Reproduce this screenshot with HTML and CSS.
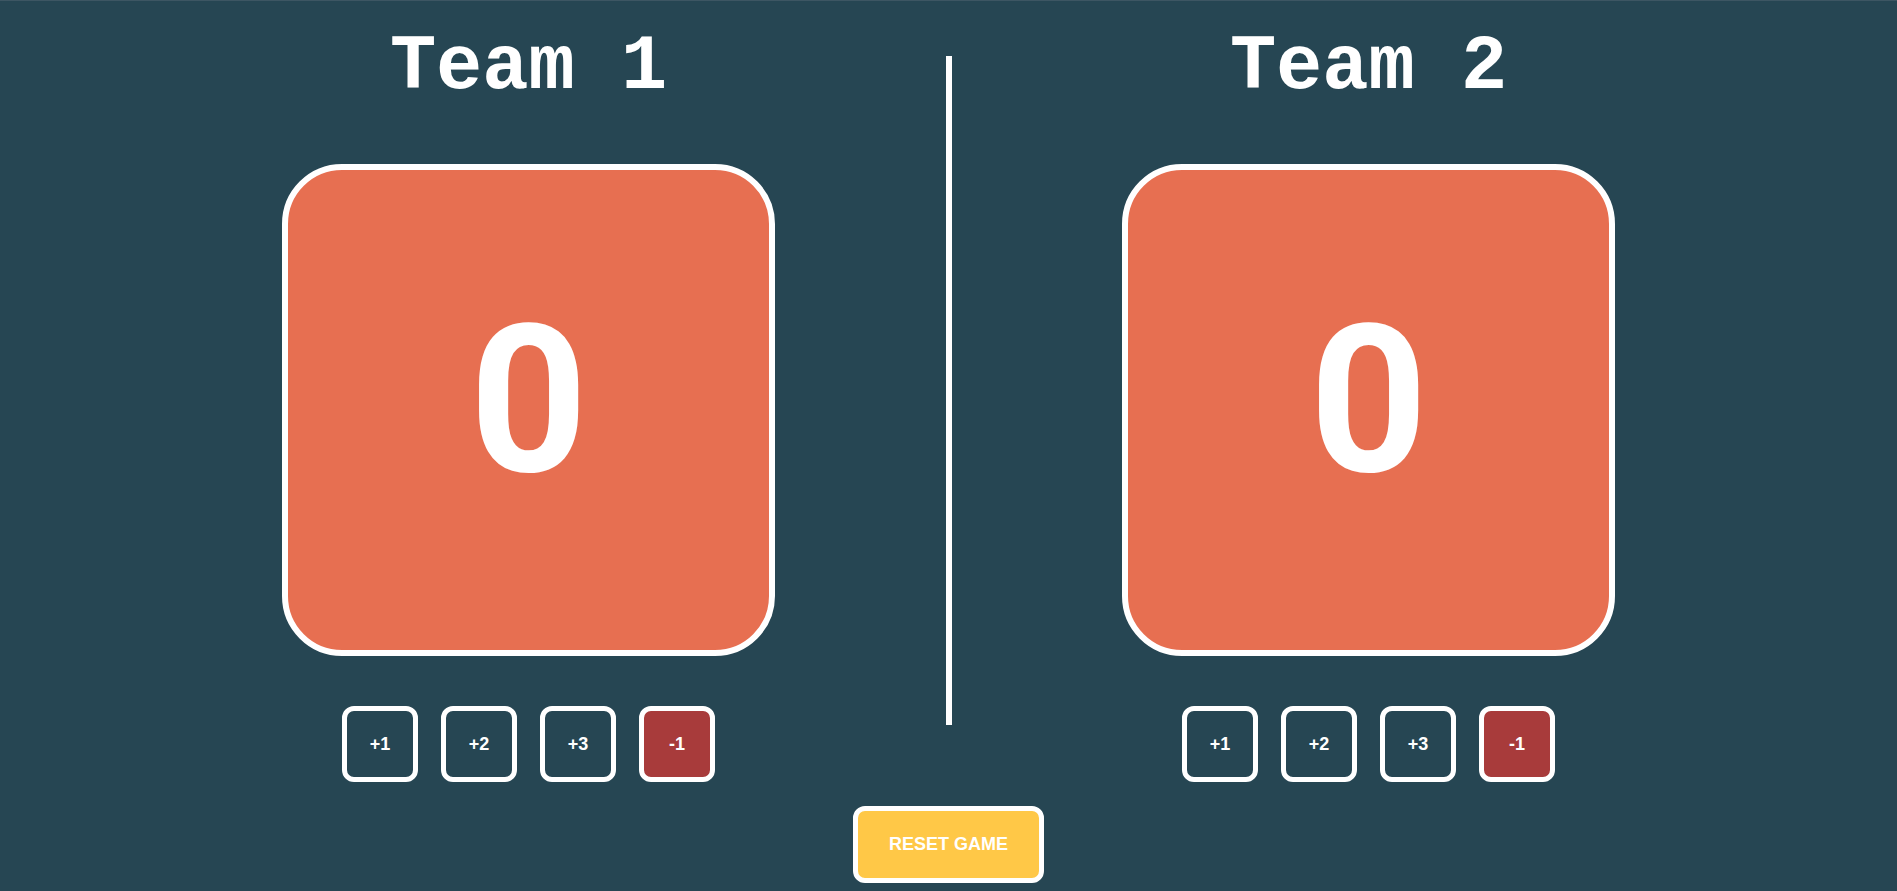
FILE: index.html
```html
<!DOCTYPE html>
<html lang="en">
<head>
<meta charset="utf-8">
<title>Scoreboard</title>
<link rel="stylesheet" href="styles.css">
</head>
<body>
<main class="board">
  <section class="team">
    <h1 class="team-name">Team 1</h1>
    <div class="score">0</div>
    <div class="controls">
      <button class="btn">+1</button>
      <button class="btn">+2</button>
      <button class="btn">+3</button>
      <button class="btn btn-minus">-1</button>
    </div>
  </section>
  <div class="divider"></div>
  <section class="team">
    <h1 class="team-name">Team 2</h1>
    <div class="score">0</div>
    <div class="controls">
      <button class="btn">+1</button>
      <button class="btn">+2</button>
      <button class="btn">+3</button>
      <button class="btn btn-minus">-1</button>
    </div>
  </section>
</main>
<div class="footer">
  <button class="reset">RESET GAME</button>
</div>
</body>
</html>
```

FILE: styles.css
```css
html, body {
  margin: 0;
  padding: 0;
}
body {
  background: #264653;
  border-top: 1px solid #3d5663;
  min-height: 890px;
  overflow: hidden;
}
.board {
  display: flex;
  justify-content: center;
  gap: 57px;
}
.team {
  width: 720px;
  display: flex;
  flex-direction: column;
  align-items: center;
}
.team-name {
  margin: 22px 0 0;
  height: 90px;
  font-family: "Courier New", "Liberation Mono", monospace;
  font-weight: bold;
  font-size: 77px;
  line-height: 90px;
  color: #ffffff;
}
.score {
  margin-top: 51px;
  box-sizing: border-box;
  width: 493px;
  height: 492px;
  border: 6px solid #ffffff;
  border-radius: 60px;
  background: #e76f51;
  color: #ffffff;
  font-family: Roboto, "Noto Sans", sans-serif;
  font-weight: bold;
  font-size: 206px;
  display: flex;
  align-items: center;
  justify-content: center;
  padding-bottom: 20px;
}
.controls {
  margin-top: 50px;
  display: flex;
  gap: 23px;
}
.btn {
  box-sizing: border-box;
  width: 76px;
  height: 76px;
  border: 5px solid #ffffff;
  border-radius: 12px;
  background: #264653;
  color: #ffffff;
  font-family: "Liberation Sans", Arial, sans-serif;
  font-weight: bold;
  font-size: 18px;
  padding: 0;
}
.btn-minus {
  background: #a83b3b;
}
.divider {
  width: 6px;
  height: 669px;
  margin-top: 55px;
  background: #ffffff;
}
.footer {
  display: flex;
  justify-content: center;
  margin-top: 24px;
}
.reset {
  box-sizing: border-box;
  width: 191px;
  height: 77px;
  border: 5px solid #ffffff;
  border-radius: 12px;
  background: #ffc847;
  color: #ffffff;
  font-family: "Liberation Sans", Arial, sans-serif;
  font-weight: bold;
  font-size: 18px;
  padding: 0;
}
```
